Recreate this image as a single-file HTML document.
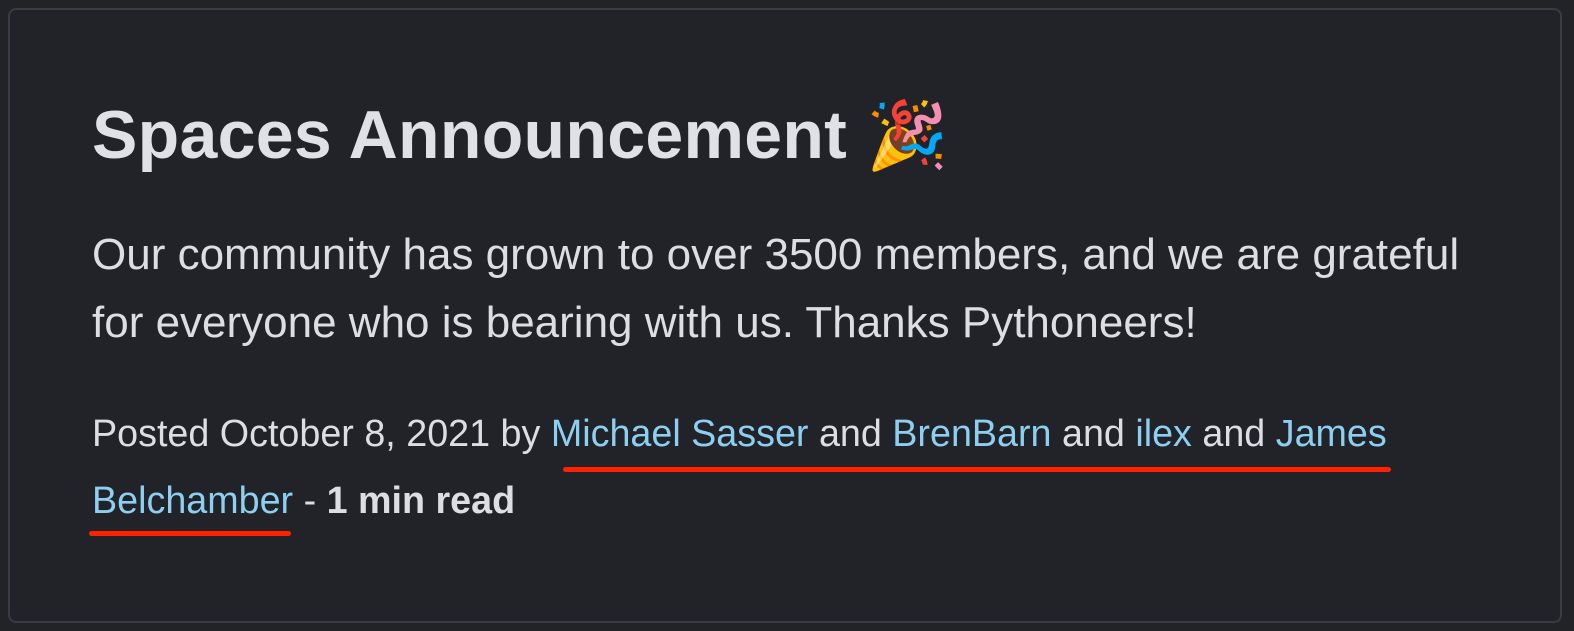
<!DOCTYPE html>
<html><head><meta charset="utf-8"><style>
html,body{margin:0;padding:0;background:#212327;width:1574px;height:631px;overflow:hidden}
.card{position:absolute;left:8px;top:8px;width:1550px;height:611px;border:2px solid #393c42;border-radius:8px;background:#212328}
.t{position:absolute;left:92px;white-space:nowrap;color:#dfe1e6;font-family:"Liberation Sans",sans-serif}
h1{margin:0;font-size:68px;font-weight:bold;top:96px;letter-spacing:0.3px}
.p{font-size:44px;font-weight:normal;color:#dcdee3}
.m{font-size:37.7px;color:#dcdee3}
a{color:#8ccff0;text-decoration:none}
.u{position:absolute;height:5px;background:#ff2200;border-radius:3px}
</style></head><body>
<div class="card"></div>
<h1 class="t" style="top:96px">Spaces Announcement <span style="font-size:66px">🎉</span></h1>
<div class="t p" style="top:230px">Our community has grown to over 3500 members, and we are grateful</div>
<div class="t p" style="top:298px">for everyone who is bearing with us. Thanks Pythoneers!</div>
<div class="t m" style="top:412px">Posted October 8, 2021 by <a>Michael Sasser</a> and <a>BrenBarn</a> and <a>ilex</a> and <a>James</a></div>
<div class="t m" style="top:479px"><a>Belchamber</a> - <b>1 min read</b></div>
<div class="u" style="left:563px;top:467px;width:828px"></div>
<div class="u" style="left:89px;top:531px;width:202px"></div>
</body></html>
